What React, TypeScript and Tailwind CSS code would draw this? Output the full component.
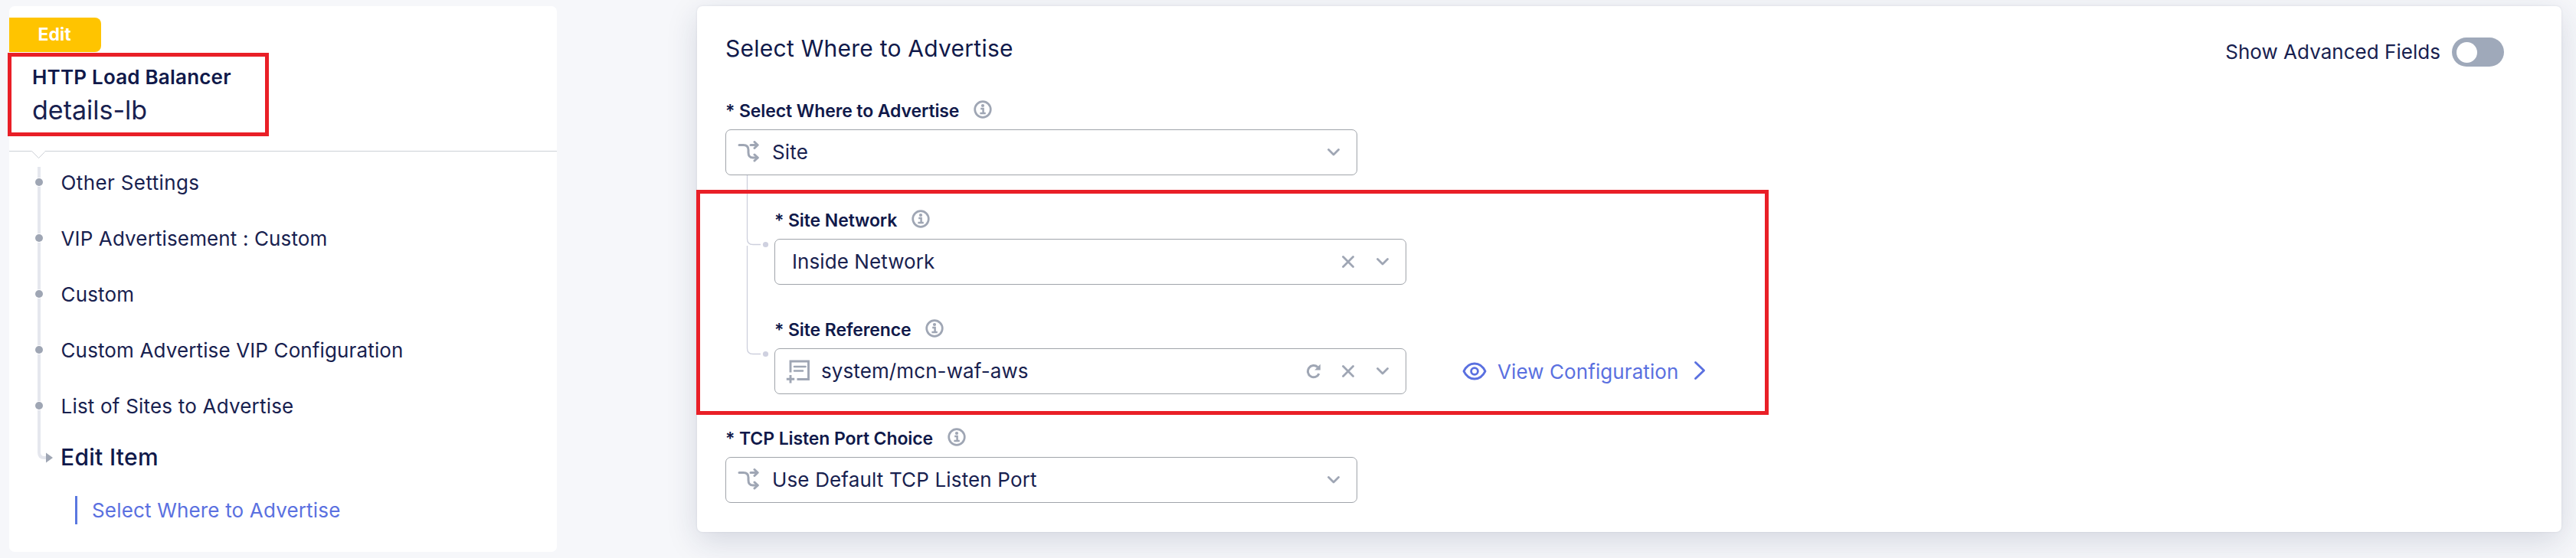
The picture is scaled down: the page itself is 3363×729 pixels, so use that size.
import React from "react";

const CRUMBS: [string, string][] = [
  ["Other Settings", "tracking-[0.38px]"],
  ["VIP Advertisement : Custom", "tracking-[0.13px]"],
  ["Custom", "tracking-[0.16px]"],
  ["Custom Advertise VIP Configuration", "tracking-[0.13px]"],
  ["List of Sites to Advertise", "tracking-[0.2px]"],
];

function InfoIcon() {
  return (
    <svg width="24" height="24" viewBox="0 0 24 24" fill="none" stroke="#9fa6b4" className="relative -top-[2px]">
      <circle cx="12" cy="12" r="10.3" strokeWidth="2.7" />
      <circle cx="12" cy="7" r="2.1" fill="#9fa6b4" stroke="none" />
      <path d="M9.2 11h3.4v6M8.4 17h7.400" strokeWidth="2.5" />
    </svg>
  );
}

function BranchIcon() {
  return (
    <svg width="28" height="28" viewBox="0 0 28 28" fill="none" stroke="#9fa6b4" strokeWidth="3" strokeLinecap="round" strokeLinejoin="round" className="relative -top-px">
      <path d="M2 5.5h5.500c4.500 0 6.500 2 6.500 6.200v3.600c0 4.400 2 6.700 6 6.700h6" />
      <path d="M17 5.500h9M22 1.500l4.200 4-4.200 4M22 18l4.200 4-4.200 4" />
    </svg>
  );
}

function DocIcon() {
  return (
    <svg width="32" height="32" viewBox="0 0 32 32" fill="none" stroke="#9fa6b4" strokeWidth="2.9">
      <path d="M6 17.500V3h23.500v23.500H14.500" />
      <path d="M11 10h14.500M11 15.500h11" strokeLinecap="round" strokeWidth="2.6" />
      <path d="M6 21v10.400M.8 26.200h10.400" />
    </svg>
  );
}

function ChevronDown() {
  return (
    <svg width="16" height="10" viewBox="0 0 16 10" fill="none" stroke="#9fa6b4" strokeWidth="2.8" strokeLinecap="round" strokeLinejoin="round">
      <path d="M1.500 1.500L8 7.900l6.500-6.400" />
    </svg>
  );
}

function Cross() {
  return (
    <svg width="16" height="16" viewBox="0 0 16 16" fill="none" stroke="#9fa6b4" strokeWidth="2.8" strokeLinecap="round">
      <path d="M1.500 1.500l13 13M14.500 1.500l-13 13" />
    </svg>
  );
}

function Reload() {
  return (
    <svg width="20" height="20" viewBox="0 0 20 20" fill="none" stroke="#9fa6b4" strokeWidth="3">
      <path d="M17 13.200A7.600 7.600 0 1 1 15.200 4.600" />
      <path d="M18.800 .8v7.600h-7.600z" fill="#9fa6b4" stroke="none" />
    </svg>
  );
}

function Label({ text }: { text: string }) {
  return (
    <div className="mb-[7px] flex h-[34px] items-center gap-[18.500px]">
      <span className="text-[23px] leading-[34px] font-semibold tracking-[-0.1px] whitespace-nowrap">{text}</span>
      <InfoIcon />
    </div>
  );
}

function Select({ icon, value, pad, actions, valueClass }: {
  icon?: React.ReactNode; value: string; pad: string; actions?: React.ReactNode; valueClass: string;
}) {
  return (
    <div className={`flex h-[60px] w-[825px] items-center rounded-[7px] border border-[#a0a4aa] bg-white pr-[22px] ${pad}`}>
      {icon}
      <span className={`text-[26px] leading-[58px] whitespace-nowrap text-[#18214f] ${valueClass}`}>{value}</span>
      <div className="ml-auto flex items-center">
        {actions}
        <ChevronDown />
      </div>
    </div>
  );
}

export default function App() {
  return (
    <div className="relative flex h-[729px] w-[3363px] items-start overflow-hidden bg-[#f6f7fa] pt-2 pl-3 font-['Inter',sans-serif] text-[#10194a]">
      <aside className="h-[713px] w-[715px] shrink-0 rounded-[7px] bg-white">
        <header className="relative flex h-[190px] flex-col items-start border-b border-[#cdd1d7] pt-[15px]">
          <div className="flex h-[45px] w-[120px] items-center rounded-r-[8px] bg-[#ffc400] pl-[37.500px] text-[23px] font-bold text-white">Edit</div>
          <div className="mt-[17px] pl-[30px] text-[26px] leading-[32px] font-semibold tracking-[0.2px]">HTTP Load Balancer</div>
          <div className="mt-[6px] pl-[30px] text-[34px] leading-[42px] text-[#18214f]">details-lb</div>
          <svg width="18" height="11" viewBox="0 0 18 11" className="absolute top-[189px] left-[29px]" fill="#fff">
            <path d="M0 0h18L9.500 9.500z" />
            <path d="M.5 .5l9 9 8-8" stroke="#cdd1d7" fill="none" />
          </svg>
        </header>
        <div className="relative pt-[13px]">
          <svg width="50" height="396" viewBox="0 0 50 396" fill="none" className="absolute top-[20px] left-[30px]">
            <path d="M9 0V373q0 7 7 7h6" stroke="#e5e7ee" strokeWidth="4" />
            <path d="M18 373.500v13l9-6.500z" fill="#9fa6b4" />
          </svg>
          <ul>
            {CRUMBS.map(([name, tracking]) => (
              <li key={name} className="relative flex h-[73px] items-start pl-[34px]">
                <span className="mt-[21.500px] size-[10px] rounded-full bg-[#9fa6b4] ring-1 ring-white" />
                <span className={`ml-[23.500px] text-[26px] leading-[56px] text-[#18214f] ${tracking}`}>{name}</span>
              </li>
            ))}
          </ul>
          <div className="-mt-[6px] pl-[67px] text-[30px] leading-[54px] font-medium tracking-[0.3px]">Edit Item</div>
          <div className="mt-[24px] ml-[86px] flex h-[37px] items-center border-l-[3px] border-[#5a78e0] pl-[19px] text-[26px] tracking-[0.17px] text-[#5a70e0]">
            Select Where to Advertise
          </div>
        </div>
      </aside>

      <main className="relative ml-[183px] h-[687px] w-[2434px] shrink-0 rounded-[7px] bg-white pl-[37px] shadow-[0_12px_40px_rgba(30,40,80,0.15),0_0_3px_rgba(30,40,80,0.1)]">
        <div className="flex h-[120px] justify-between pr-[75px]">
          <h1 className="pt-[35px] text-[30px] leading-[41px] tracking-[0.25px]">Select Where to Advertise</h1>
          <div className="mt-[41px] flex h-[38px] items-center gap-[15px]">
            <span className="relative -top-px text-[26px] tracking-[0.03px] text-[#18214f]">Show Advanced Fields</span>
            <span className="flex h-[38px] w-[68px] items-center rounded-full bg-[#9fa9ba] pl-[5.500px]">
              <span className="size-[27px] rounded-full bg-white" />
            </span>
          </div>
        </div>

        <div className="flex flex-col">
          <Label text="* Select Where to Advertise" />
          <Select icon={<BranchIcon />} value="Site" pad="pl-[15px]" valueClass="ml-[17px] tracking-[0.18px]" />

          <div className="relative mt-[42px] flex flex-col gap-[42px] pl-[64px]">
            <svg width="40" height="240" viewBox="0 0 40 240" fill="none" stroke="#cdd0dd" className="absolute -top-[42px] left-[24px]">
              <path d="M4.500 0V83q0 7.500 7.500 7.500H22M4.500 92V226q0 7.500 7.500 7.500H22" strokeWidth="1.300" />
              <circle cx="28.500" cy="90.500" r="3.600" fill="#cfd1e0" stroke="none" />
              <circle cx="28.500" cy="233.500" r="3.600" fill="#cfd1e0" stroke="none" />
            </svg>
            <div>
              <Label text="* Site Network" />
              <Select
                value="Inside Network"
                pad="pl-[22px]"
                valueClass="tracking-[0.08px]"
                actions={<span className="mr-[29px]"><Cross /></span>}
              />
            </div>
            <div>
              <Label text="* Site Reference" />
              <div className="flex items-center">
                <Select
                  icon={<DocIcon />}
                  value="system/mcn-waf-aws"
                  pad="pl-[14px]"
                  valueClass="ml-[14px] tracking-[0.1px]"
                  actions={
                    <>
                      <span className="mr-[27px]"><Reload /></span>
                      <span className="mr-[29px]"><Cross /></span>
                    </>
                  }
                />
                <div className="ml-[73px] flex items-center text-[#5a70e0]">
                  <svg width="32" height="26" viewBox="0 0 32 26" fill="none" stroke="#5a70e0" strokeWidth="2.800">
                    <path d="M2 13C5.500 6 10.500 3 16 3s10.500 3 14 10c-3.500 7-8.500 10-14 10S5.500 20 2 13z" strokeLinejoin="round" />
                    <circle cx="16" cy="13" r="4.400" />
                  </svg>
                  <span className="ml-[14px] text-[26px] tracking-[0.09px] whitespace-nowrap">View Configuration</span>
                  <svg width="16" height="26" viewBox="0 0 16 26" fill="none" stroke="#5a70e0" strokeWidth="2.900" strokeLinecap="round" strokeLinejoin="round" className="relative -top-px ml-[20px]">
                    <path d="M2.500 2.500L13.500 13l-11 10.500" />
                  </svg>
                </div>
              </div>
            </div>
          </div>

          <div className="mt-[41px]">
            <Label text="* TCP Listen Port Choice" />
            <Select icon={<BranchIcon />} value="Use Default TCP Listen Port" pad="pl-[15px]" valueClass="ml-[17px] tracking-[0.15px]" />
          </div>
        </div>
      </main>

      <div className="absolute top-[69px] left-[10px] h-[109px] w-[341px] border-[5px] border-[#e91f27]" />
      <div className="absolute top-[248px] left-[909px] h-[294px] w-[1400px] border-[5px] border-[#e91f27]" />
    </div>
  );
}
